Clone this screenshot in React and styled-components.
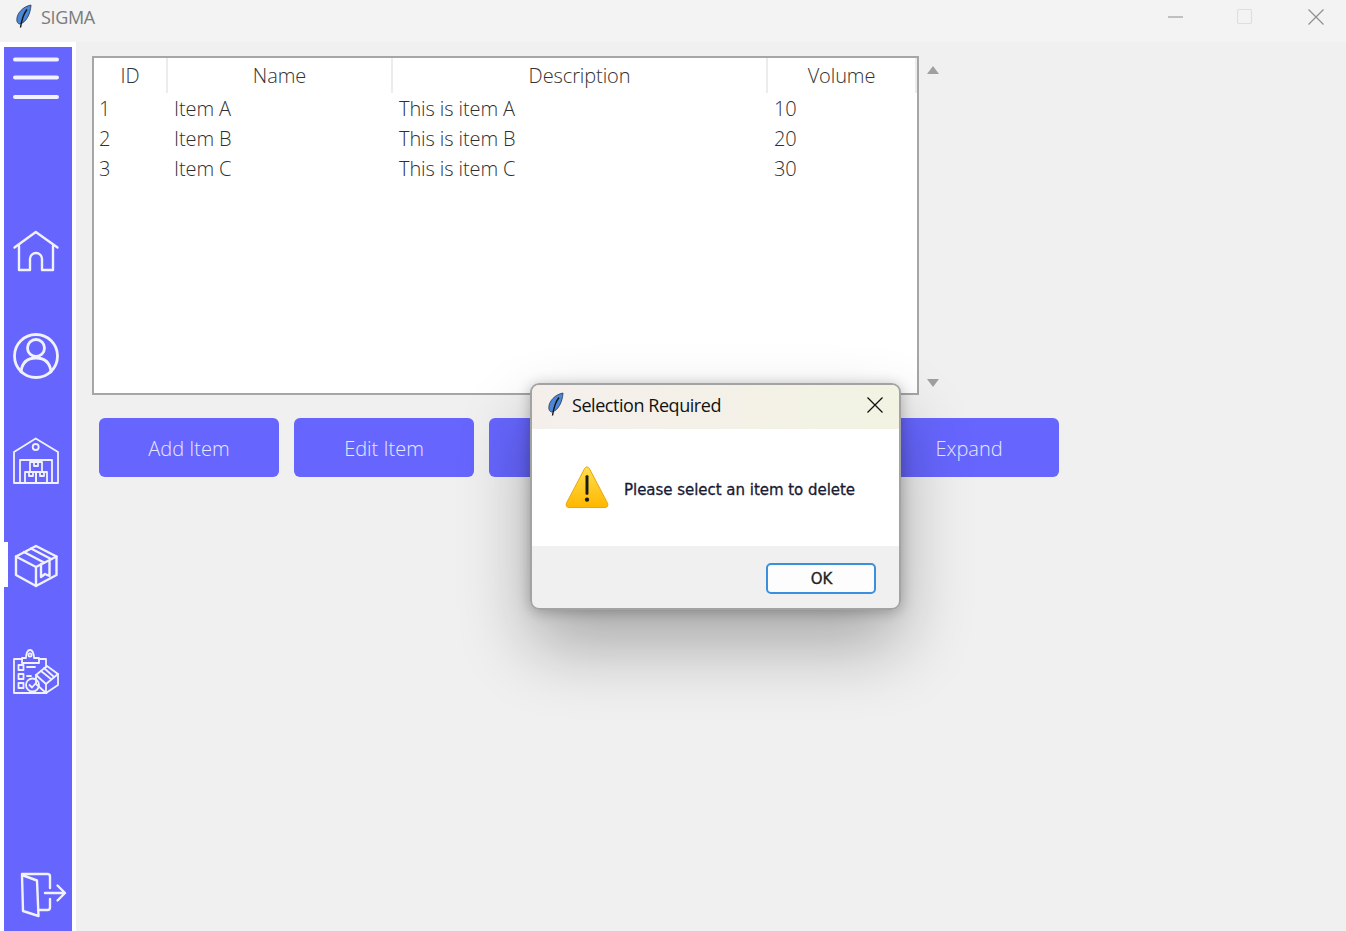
import React from "react";
import styled, { createGlobalStyle } from "styled-components";

const Global = createGlobalStyle`
  html, body { margin: 0; padding: 0; background: #f0f0f0; overflow: hidden; }
  * { box-sizing: border-box; }
`;

const Window = styled.div`
  position: relative; width: 1346px; height: 931px; overflow: hidden;
  background: #f0f0f0; font-family: "Open Sans", "Liberation Sans", sans-serif;
  display: flex; flex-direction: column;
`;
const TitleBar = styled.header`
  height: 42px; flex: none; background: #f3f3f3; display: flex; align-items: center; padding-bottom: 8px;
`;
const AppIcon = styled.svg`
  width: 36px; height: 34px; flex: none; margin-right: 5px;
`;
const AppTitle = styled.span`
  font-size: 18px; color: #7b7b7b; letter-spacing: -0.35px; flex: 1;
`;
const WinButton = styled.svg`
  width: 16px; height: 16px; flex: none; margin-right: ${p => p.$gap}px;
`;
const Body = styled.div`
  flex: 1; display: flex; min-height: 0;
`;
const SideRail = styled.aside`
  width: 76px; flex: none; background: #fff; padding: 5px 4px 0 4px; display: flex;
`;
const Sidebar = styled.nav`
  flex: 1; background: #6666ff; display: flex; flex-direction: column;
`;
const MenuItem = styled.div`
  height: 62px; padding-left: 4px; display: flex; align-items: center; margin-bottom: 89.5px; flex: none;
`;
const NavItem = styled.div`
  position: relative; height: 105px; flex: none; padding-left: 4px; display: flex; align-items: center;
  ${p => p.$active && `
    &::before {
      content: ""; position: absolute; left: 0; top: 28px; width: 4px; height: 45px; background: #fff;
    }
  `}
`;
const ExitItem = styled.div`
  margin-top: auto; padding: 0 0 8px 4px; display: flex;
`;
const Icon = styled.svg`
  width: 56px; height: 56px; flex: none; fill: none; stroke: #f1f1ff; stroke-width: 2.4;
  stroke-linejoin: round; stroke-linecap: round;
`;
const Main = styled.main`
  flex: 1; padding: 14px 0 0 16px; display: flex; flex-direction: column; align-items: flex-start;
`;
const TableRow = styled.div`
  display: flex; align-items: stretch;
`;
const TableFrame = styled.div`
  width: 827px; height: 339px; background: #fff; border: 2px solid #a6a6a6;
  color: #333;
`;
const Grid = styled.div`
  display: grid; grid-template-columns: 74px 225px 375px 149px;
`;
const Head = styled.div`
  height: 35px; display: flex; align-items: center; justify-content: center;
  font-size: 20px; font-weight: 300; letter-spacing: -0.1px;
  border-right: 2px solid #ececec; color: #333;
`;
const Cell = styled.div`
  height: 30px; display: flex; align-items: center; padding-left: 6px;
  font-size: 20px; font-weight: 300; letter-spacing: -0.1px; color: #2f2f2f;
  &:nth-child(4n + 1) { padding-left: 5px; }
`;
const Scroll = styled.div`
  width: 28px; display: flex; flex-direction: column; justify-content: space-between; align-items: center;
  padding: 10px 0 8px;
`;
const Arrow = styled.div`
  width: 0; height: 0; border-left: 6.5px solid transparent; border-right: 6.5px solid transparent;
  ${p => p.$down ? "border-top: 8px solid #a0a0a0;" : "border-bottom: 8px solid #a0a0a0;"}
`;
const Actions = styled.div`
  display: flex; gap: 15px; margin: 23px 0 0 7px;
`;
const ActionButton = styled.button`
  width: 180px; height: 59px; border: none; border-radius: 6px; background: #6666ff; color: #e8e8ff;
  font-family: inherit; font-size: 20px; font-weight: 300; letter-spacing: 0; padding: 1px 0 0;
`;
const Dialog = styled.section`
  position: absolute; left: 530px; top: 383px; width: 371px; height: 227px;
  border: 2px solid #a3a3a3; border-radius: 9px; overflow: hidden; background: #f0f0f0;
  display: flex; flex-direction: column;
`;
const Shadow = styled.div`
  position: absolute; left: 530px; top: 383px; width: 371px; height: 227px; border-radius: 9px;
  box-shadow: 0 36px 70px 0 rgba(0,0,0,0.3), 0 2px 14px rgba(0,0,0,0.25);
`;
const DialogBar = styled.div`
  height: 44px; flex: none; display: flex; align-items: center; padding-bottom: 4px;
  background: linear-gradient(90deg, #f5efec, #f2f3e3);
`;
const DialogIcon = styled.svg`
  width: 36px; height: 30px; flex: none; margin-left: 5.5px;
`;
const DialogTitle = styled.span`
  flex: 1; font-family: "Open Sans", sans-serif; font-size: 18px; color: #111; letter-spacing: -0.45px; margin-left: -1.5px;
`;
const CloseIcon = styled.svg`
  width: 16px; height: 16px; flex: none; margin-right: 16px;
`;
const DialogBody = styled.div`
  height: 117px; flex: none; background: #fff; display: flex; align-items: center; padding: 0 0 0 33px;
`;
const WarnIcon = styled.svg`
  width: 44px; height: 45px; flex: none; margin-right: 15px;
`;
const Message = styled.p`
  margin: 4px 0 0; font-family: "DejaVu Sans", sans-serif; font-size: 15px; font-weight: 400;
  color: #1a1a33; -webkit-text-stroke: 0.3px #1a1a33; letter-spacing: -0.03px; white-space: nowrap;
`;
const DialogFoot = styled.div`
  flex: 1; display: flex; justify-content: flex-end; align-items: flex-start; padding: 17px 23px 0 0;
`;
const OkButton = styled.button`
  width: 110px; height: 31px; background: #fdfdfd; border: 2px solid #3a90dc; border-radius: 5px;
  font-family: "DejaVu Sans", sans-serif; font-size: 15px; color: #222; -webkit-text-stroke: 0.3px #222; padding: 1px 0 0 1px;
`;

const Feather = ({ as: C, vb }) => (
  <C viewBox={vb}>
    <path d="M31 5C23 6.5 17 13 16.8 19.5C16.7 21.8 17.8 23.8 19.6 24C26 23 30.5 14 31 5Z" fill="#4c86d6" stroke="#26354f" strokeWidth="0.8" />
    <path d="M27 9.5C24 13 22 18 20.5 27.5" fill="none" stroke="#111" strokeWidth="1.4" />
  </C>
);

const rows = [
  ["1", "Item A", "This is item A", "10"],
  ["2", "Item B", "This is item B", "20"],
  ["3", "Item C", "This is item C", "30"],
];

export default function App() {
  return (
    <Window>
      <Global />
      <TitleBar>
        <Feather as={AppIcon} vb="0 0 36 34" />
        <AppTitle>SIGMA</AppTitle>
        <WinButton $gap={53} viewBox="0 0 16 16"><path d="M0 8H15" stroke="#8c8c8c" fill="none" /></WinButton>
        <WinButton $gap={55} viewBox="0 0 16 16"><rect x="0.5" y="0.5" width="14" height="14" rx="1.5" stroke="#dedede" fill="none" strokeWidth="1.2" /></WinButton>
        <WinButton $gap={22} viewBox="0 0 16 16"><path d="M0.5 0.5L15.5 15.5M15.5 0.5L0.5 15.5" stroke="#8f8f8f" fill="none" strokeWidth="1.2" /></WinButton>
      </TitleBar>
      <Body>
        <SideRail>
          <Sidebar>
            <MenuItem>
              <Icon viewBox="8 50 56 56" style={{ strokeWidth: 4 }}>
                <path d="M15 59.5H57M15 77.5H57M15 97H57" />
              </Icon>
            </MenuItem>
            <NavItem>
              <Icon viewBox="8 223 56 56">
                <path d="M14.5 247.5L35.8 232L57.5 247.5" />
                <path d="M19 246V270H30V259a6 6 0 0 1 12 0V270H53V246" />
              </Icon>
            </NavItem>
            <NavItem>
              <Icon viewBox="8 328 56 56" style={{ strokeWidth: 2.8 }}>
                <circle cx="36" cy="356" r="21.5" />
                <circle cx="36" cy="348" r="8.5" />
                <path d="M21 372C22 362 28 358 36 358C44 358 50 362 51 372" />
              </Icon>
            </NavItem>
            <NavItem>
              <Icon viewBox="8 433 56 56" style={{ strokeWidth: 1.8 }}>
                <path d="M14 452L35.7 438.5L58 452V483H14Z" />
                <circle cx="35.7" cy="447" r="3" />
                <path d="M20 483V460H52V483" />
                <rect x="30" y="462" width="12" height="10" />
                <rect x="25" y="472" width="11" height="11" />
                <rect x="36" y="472" width="11" height="11" />
                <path d="M34 462V466H38V462M29 472V476H33V472M40 472V476H44V472" />
              </Icon>
            </NavItem>
            <NavItem $active>
              <Icon viewBox="8 538 56 56">
                <path d="M36 546L56.5 556.5V575L36 586L16 575V556.5Z" />
                <path d="M16 556.5L36 567L56.5 556.5M36 567V586" />
                <path d="M24 552L44 562.5M31 548.5L51 559" />
                <path d="M41 564V577L45 574L49.5 576V561.5" />
              </Icon>
            </NavItem>
            <NavItem>
              <Icon viewBox="8 643 56 56" style={{ strokeWidth: 1.8 }}>
                <path d="M39 659H46V667M14 659H22V659M14 659V693H46.5" />
                <path d="M22 663V658H26C26 655 27 650 30 650C33 650 34 655 34 658H39V663Z" />
                <circle cx="30" cy="655" r="1.6" />
                <rect x="18.5" y="665" width="5" height="5" />
                <rect x="18.5" y="674" width="5" height="5" />
                <rect x="18.5" y="683" width="5" height="5" />
                <path d="M27 667H35M27 676H31" />
                <path d="M36 675L47 666L58 674V685L46 693L36 684Z" />
                <path d="M36 675L46 684L58 674M46 684V693M41 671L51 679M44 668L54 677" />
                <circle cx="32.5" cy="685" r="6.5" />
                <path d="M29.5 685L32 687.5L36 683" />
              </Icon>
            </NavItem>
            <ExitItem>
              <Icon viewBox="8 867 60 56" style={{ width: 60, strokeWidth: 2.4 }}>
                <path d="M22 875L37 880.5L38.5 916L23 911Z" />
                <path d="M22 874H47.5Q50 874 50 876.5V888M50 899V907.5Q50 910 47.5 910H38" />
                <path d="M45 893H65M57.5 885.5L65 893L57.5 900.5" />
              </Icon>
            </ExitItem>
          </Sidebar>
        </SideRail>
        <Main>
          <TableRow>
            <TableFrame>
              <Grid role="table">
                {["ID", "Name", "Description", "Volume"].map(h => <Head key={h}>{h}</Head>)}
                {rows.flat().map((c, i) => <Cell key={i}>{c}</Cell>)}
              </Grid>
            </TableFrame>
            <Scroll><Arrow /><Arrow $down /></Scroll>
          </TableRow>
          <Actions>
            <ActionButton>Add Item</ActionButton>
            <ActionButton>Edit Item</ActionButton>
            <ActionButton />
            <ActionButton />
            <ActionButton>Expand</ActionButton>
          </Actions>
        </Main>
      </Body>
      <Shadow />
      <Dialog>
        <DialogBar>
          <Feather as={DialogIcon} vb="6 2 36 30" />
          <DialogTitle>Selection Required</DialogTitle>
          <CloseIcon viewBox="0 0 16 16"><path d="M0.5 0.5L15.5 15.5M15.5 0.5L0.5 15.5" stroke="#111" fill="none" strokeWidth="1.3" /></CloseIcon>
        </DialogBar>
        <DialogBody>
          <WarnIcon viewBox="0 0 45 45">
            <defs>
              <linearGradient id="warn" x1="0" y1="0" x2="0" y2="1">
                <stop offset="0" stopColor="#ffdf4d" />
                <stop offset="1" stopColor="#ffb700" />
              </linearGradient>
            </defs>
            <path d="M22.5 1.5C23.6 1.5 24.4 2.2 25 3.2L43.5 38.5C44.5 40.5 43.3 43 41 43H4C1.7 43 .5 40.5 1.5 38.5L20 3.2C20.6 2.2 21.4 1.5 22.5 1.5Z" fill="url(#warn)" stroke="#e9a400" strokeWidth="1" />
            <rect x="21" y="10" width="3" height="20" rx="1" fill="#1b1b1b" />
            <circle cx="22.5" cy="35" r="2.2" fill="#1b1b1b" />
          </WarnIcon>
          <Message>Please select an item to delete</Message>
        </DialogBody>
        <DialogFoot><OkButton>OK</OkButton></DialogFoot>
      </Dialog>
    </Window>
  );
}
